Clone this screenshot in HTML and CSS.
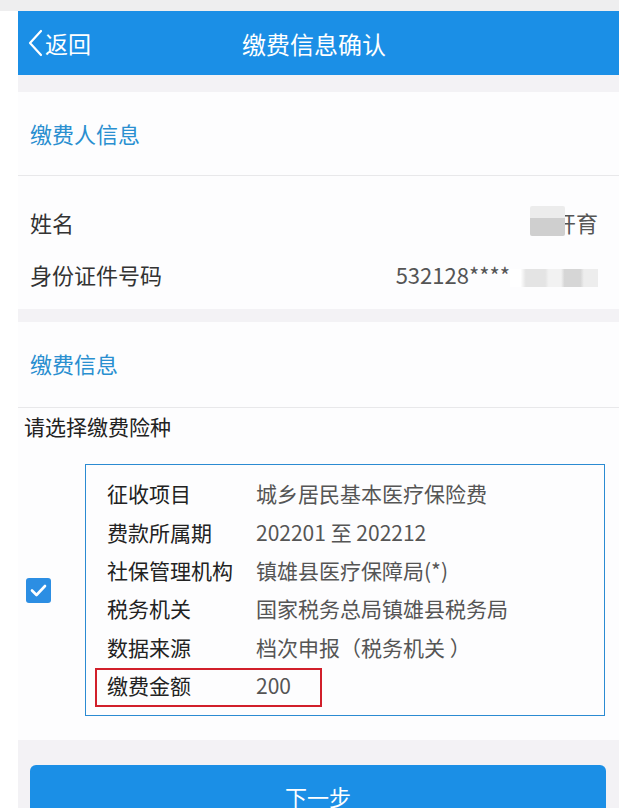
FILE: index.html
```html
<!DOCTYPE html>
<html lang="zh-CN">
<head>
    <meta charset="UTF-8" />
    <meta name="viewport" content="width=device-width, initial-scale=1.0">
    <title>缴费信息确认</title>
    <link rel="stylesheet" href="styles.css">
</head>
<body>

<div class="status-strip"></div>

<div class="page">
    <!-- Top bar -->
    <header class="topbar">
        <a href="#" class="back">
            <svg class="back-icon" width="16" height="28" viewBox="0 0 16 28">
                <path d="M14 2 L3 14 L14 26" fill="none" stroke="#fff" stroke-width="2.2" stroke-linecap="round" stroke-linejoin="round"/>
            </svg>
            <span>返回</span>
        </a>
        <h1 class="topbar-title">缴费信息确认</h1>
    </header>

    <!-- Payer section -->
    <section class="card">
        <h2 class="card-title">缴费人信息</h2>
        <div class="info-list">
            <div class="info-row">
                <span class="info-label">姓名</span>
                <span class="info-value"><span class="mask-name"></span>开育</span>
            </div>
            <div class="info-row">
                <span class="info-label">身份证件号码</span>
                <span class="info-value">532128****<span class="mask-id"></span></span>
            </div>
        </div>
    </section>

    <!-- Payment section -->
    <section class="card card-pay">
        <h2 class="card-title">缴费信息</h2>
        <p class="pick-hint">请选择缴费险种</p>

        <div class="item-row">
            <span class="checkbox">
                <svg width="25" height="25" viewBox="0 0 25 25">
                    <rect x="0" y="0" width="25" height="25" rx="3" fill="#2c8ee3"/>
                    <path d="M6 12.5 L10.5 17 L19 8" fill="none" stroke="#fff" stroke-width="2.6" stroke-linecap="round" stroke-linejoin="round"/>
                </svg>
            </span>
            <div class="item-box">
                <div class="item-line"><span class="item-key">征收项目</span><span class="item-val">城乡居民基本医疗保险费</span></div>
                <div class="item-line"><span class="item-key">费款所属期</span><span class="item-val">202201 至 202212</span></div>
                <div class="item-line"><span class="item-key">社保管理机构</span><span class="item-val">镇雄县医疗保障局(*)</span></div>
                <div class="item-line"><span class="item-key">税务机关</span><span class="item-val">国家税务总局镇雄县税务局</span></div>
                <div class="item-line"><span class="item-key">数据来源</span><span class="item-val">档次申报（税务机关 ）</span></div>
                <div class="item-line item-amount"><span class="item-key">缴费金额</span><span class="item-val">200</span></div>
            </div>
        </div>
    </section>

    <!-- Footer action -->
    <div class="actions">
        <button type="button" class="btn-next">下一步</button>
    </div>
</div>

</body>
</html>
```

FILE: styles.css
```css
/* Base Styles */
* {
    margin: 0;
    padding: 0;
    box-sizing: border-box;
}

body {
    font-family: "Noto Sans CJK SC", "Noto Sans", sans-serif;
    background: #fff;
    color: #333;
    overflow: hidden;
}

.status-strip {
    height: 11px;
    background: #eeeeef;
}

.page {
    margin-left: 18px;
    background: #f3f2f5;
}

/* Top bar */
.topbar {
    position: relative;
    height: 64px;
    background: #1b8fe6;
    display: flex;
    align-items: center;
    justify-content: center;
}

.back {
    position: absolute;
    left: 9px;
    top: 0;
    height: 100%;
    display: flex;
    align-items: center;
    gap: 2px;
    color: #fff;
    text-decoration: none;
    font-size: 23px;
}

.back-icon {
    display: block;
}

.topbar-title {
    color: #fff;
    font-size: 24px;
    font-weight: normal;
    margin-right: 9px;
}

/* Cards */
.card {
    background: #fdfdfe;
    margin-top: 17px;
}

.card + .card {
    margin-top: 13px;
}

.card-title {
    height: 84px;
    line-height: 82px;
    padding-left: 12px;
    font-size: 22px;
    font-weight: normal;
    color: #2a8fd0;
    border-bottom: 1px solid #e8e8ea;
}

.card-pay .card-title {
    height: 86px;
    line-height: 82px;
}

.info-list {
    padding: 20px 21px 9px 12px;
}

.info-row {
    height: 52px;
    display: flex;
    align-items: center;
    justify-content: space-between;
    font-size: 22px;
}

.info-value {
    position: relative;
    color: #555;
}

/* blurred-out parts of personal data */
.mask-name {
    position: absolute;
    left: -24px;
    top: 0;
    width: 35px;
    height: 30px;
    background: linear-gradient(#ececec 0 40%, #cfcfcf 40% 100%);
    border-radius: 2px;
}

.mask-id {
    display: inline-block;
    width: 88px;
    height: 18px;
    vertical-align: middle;
    background: linear-gradient(90deg, #fff 0 12%, #e4e4e4 18% 40%, #f2f2f2 44% 58%, #d6d6d6 62% 80%, #ededed 84% 100%);
}

/* Payment items */
.pick-hint {
    padding-left: 6px;
    height: 37px;
    line-height: 36px;
    font-size: 21px;
    color: #222;
}

.item-row {
    display: flex;
    align-items: center;
    padding: 19px 14px 24px 8px;
}

.checkbox {
    display: block;
    width: 25px;
    height: 25px;
    margin-right: 34px;
}

.checkbox svg {
    display: block;
}

.item-box {
    flex: 1;
    border: 1.5px solid #2b8bd2;
    padding: 9px 0 11px 21px;
}

.item-line {
    position: relative;
    height: 38.4px;
    display: flex;
    align-items: center;
    font-size: 21px;
    color: #222;
}

.item-key {
    width: 149px;
    flex-shrink: 0;
}

.item-val {
    color: #555;
}

.item-amount::after {
    content: "";
    position: absolute;
    left: -12px;
    top: 2px;
    width: 223px;
    height: 35px;
    border: 2px solid #d11f2a;
}

/* Footer action */
.actions {
    padding: 25px 13px 20px 12px;
}

.btn-next {
    width: 100%;
    height: 60px;
    border: none;
    border-radius: 6px;
    background: #1b8fe6;
    color: #fff;
    font-family: inherit;
    font-size: 22px;
    padding-top: 2px;
}
```
